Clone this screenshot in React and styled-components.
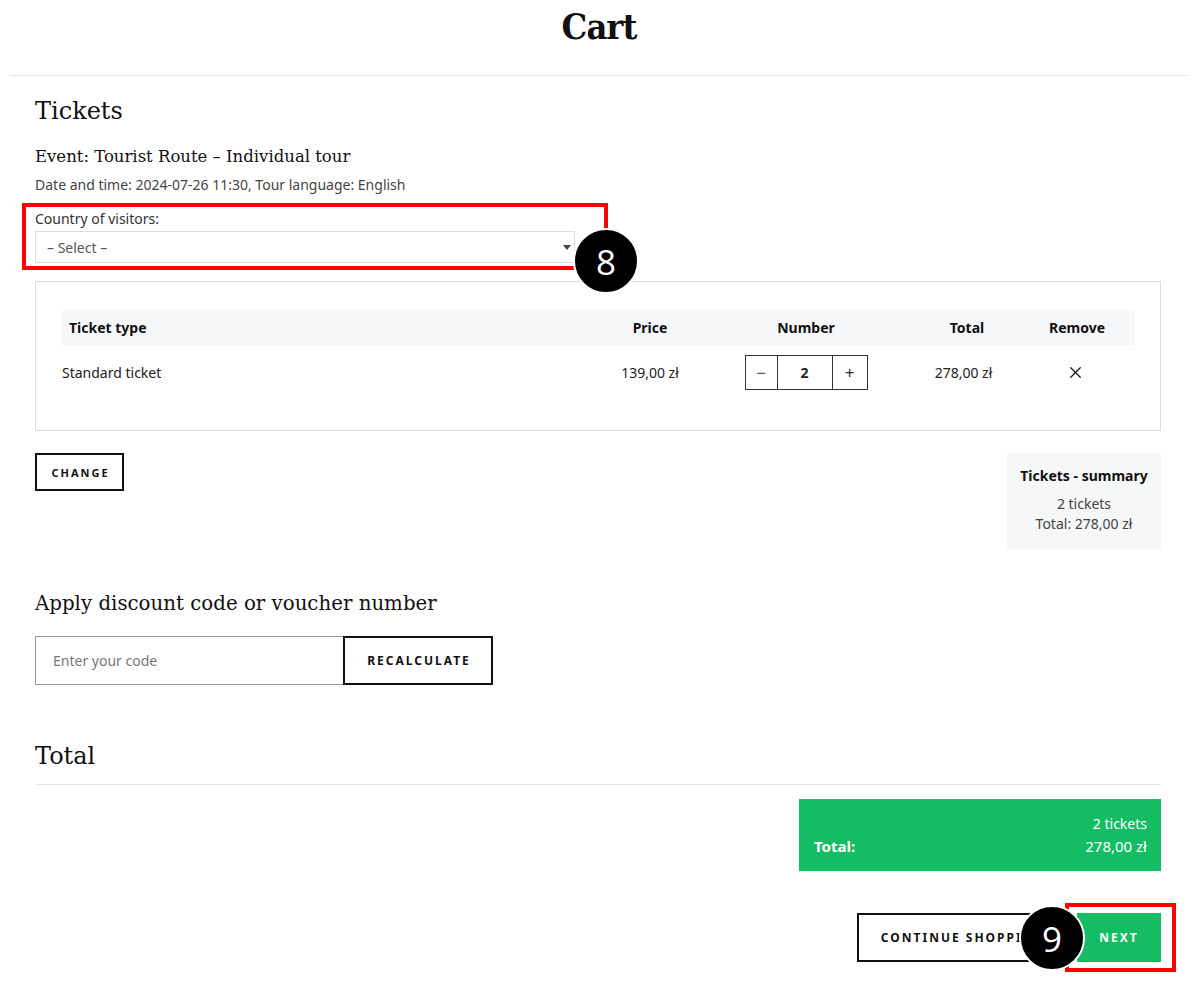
import React from "react"
import styled, { createGlobalStyle } from "styled-components"
import { X } from "lucide-react"

const GlobalStyle = createGlobalStyle`
  * { box-sizing: border-box; }
  body {
    margin: 0;
    background: #fff;
    color: #111;
    font-family: "Noto Sans", "Open Sans", sans-serif;
  }
`

const serif = `"DejaVu Serif", "Liberation Serif", serif`
const green = "#14bd63"

const rows = [{ type: "Standard ticket", price: "139,00 zł", qty: 2, total: "278,00 zł" }]

function App() {
  return (
    <Page>
      <GlobalStyle />
      <Header>
        <PageTitle>Cart</PageTitle>
      </Header>
      <Main>
        <SectionTitle>Tickets</SectionTitle>
        <EventName>Event: Tourist Route – Individual tour</EventName>
        <EventMeta>Date and time: 2024-07-26 11:30, Tour language: English</EventMeta>

        <FieldGroup>
          <Label>Country of visitors:</Label>
          <SelectBox>
            <span>– Select –</span>
            <Caret />
          </SelectBox>
          <Highlight $top={-6} $left={-13} $width={586} $height={67} />
          <Badge $top={19} $left={538}>8</Badge>
        </FieldGroup>

        <TableCard>
          <HeadRow>
            <HeadCell $align="left">Ticket type</HeadCell>
            <HeadCell>Price</HeadCell>
            <HeadCell>Number</HeadCell>
            <HeadCell>Total</HeadCell>
            <HeadCell>Remove</HeadCell>
          </HeadRow>
          {rows.map((r) => (
            <BodyRow key={r.type}>
              <Cell $align="left">{r.type}</Cell>
              <Cell>{r.price}</Cell>
              <Cell>
                <Stepper>
                  <StepBtn $w={31}>−</StepBtn>
                  <StepValue>{r.qty}</StepValue>
                  <StepBtn $w={34}>+</StepBtn>
                </Stepper>
              </Cell>
              <Cell $shift={-7}>{r.total}</Cell>
              <Cell $shift={-4}>
                <X size={19} strokeWidth={1.6} color="#111" />
              </Cell>
            </BodyRow>
          ))}
        </TableCard>

        <ActionRow>
          <OutlineButton $w={89} $h={38} $size={11}>Change</OutlineButton>
          <SummaryBox>
            <SummaryTitle>Tickets - summary</SummaryTitle>
            <SummaryLine>2 tickets</SummaryLine>
            <SummaryLine>Total: 278,00 zł</SummaryLine>
          </SummaryBox>
        </ActionRow>

        <SubTitle>Apply discount code or voucher number</SubTitle>
        <CodeRow>
          <CodeInput placeholder="Enter your code" />
          <OutlineButton $w={150} $h={49} $size={12}>Recalculate</OutlineButton>
        </CodeRow>

        <TotalTitle>Total</TotalTitle>
        <TotalBox>
          <TotalLine>
            <span />
            <TotalValue $size={14}>2 tickets</TotalValue>
          </TotalLine>
          <TotalLine>
            <TotalLabel>Total:</TotalLabel>
            <TotalValue $size={15}>278,00 zł</TotalValue>
          </TotalLine>
        </TotalBox>

        <Footer>
          <OutlineButton $w={210} $h={49} $size={12}>Continue shopping</OutlineButton>
          <NextWrap>
            <NextButton>Next</NextButton>
            <Highlight $top={-10} $left={-12} $width={111} $height={69} />
            <Badge $top={-8} $left={-58}>9</Badge>
          </NextWrap>
        </Footer>
      </Main>
    </Page>
  )
}

export default App

const Page = styled.div`
  width: 1200px;
  min-height: 981px;
  padding-bottom: 20px;
`

const Header = styled.header`
  margin: 0 12px 0 10px;
  height: 76px;
  padding-top: 4px;
  border-bottom: 1.5px solid #e4e4e4;
  text-align: center;
`

const PageTitle = styled.h1`
  margin: 0;
  font-family: ${serif};
  font-stretch: condensed;
  font-size: 36px;
  line-height: 44px;
  font-weight: 700;
  letter-spacing: -1px;
`

const Main = styled.main`
  padding: 19px 39px 0 35px;
  display: flex;
  flex-direction: column;
`

const SectionTitle = styled.h2`
  margin: 0;
  font-family: ${serif};
  font-weight: 400;
  font-size: 24px;
  line-height: 32px;
`

const EventName = styled.h3`
  margin: 18px 0 0;
  font-family: ${serif};
  font-weight: 400;
  font-size: 16.5px;
  line-height: 24px;
`

const EventMeta = styled.p`
  margin: 6px 0 0;
  font-size: 14px;
  line-height: 20px;
  color: #444;
`

const FieldGroup = styled.div`
  position: relative;
  margin-top: 14px;
  width: 540px;
`

const Label = styled.div`
  font-size: 14px;
  line-height: 20px;
  color: #333;
  margin-bottom: 2px;
`

const SelectBox = styled.div`
  height: 32px;
  border: 1px solid #dcdcdc;
  padding: 0 0 0 11px;
  display: flex;
  align-items: center;
  justify-content: space-between;
  font-size: 14px;
  color: #555;
`

const Caret = styled.span`
  width: 0;
  height: 0;
  margin-right: 3px;
  border-left: 4.5px solid transparent;
  border-right: 4.5px solid transparent;
  border-top: 5px solid #444;
`

const Highlight = styled.div`
  position: absolute;
  top: ${(p) => p.$top}px;
  left: ${(p) => p.$left}px;
  width: ${(p) => p.$width}px;
  height: ${(p) => p.$height}px;
  border: 4.5px solid #ff0000;
  pointer-events: none;
`

const Badge = styled.div`
  position: absolute;
  top: ${(p) => p.$top}px;
  left: ${(p) => p.$left}px;
  width: 66px;
  height: 66px;
  border-radius: 50%;
  background: #000;
  border: 2px solid #fff;
  color: #fff;
  display: flex;
  align-items: center;
  justify-content: center;
  font-family: "Open Sans", "Noto Sans", sans-serif;
  font-size: 35px;
  font-weight: 500;
  z-index: 2;
`

const TableCard = styled.section`
  margin-top: 18px;
  border: 1px solid #dcdcdc;
  padding: 28px 26px 40px;
`

const columns = "540px 96px 216px 106px 114px"

const HeadRow = styled.div`
  display: grid;
  grid-template-columns: ${columns};
  height: 35px;
  background: #f6f7f9;
  align-items: center;
`

const HeadCell = styled.div`
  font-size: 14px;
  font-weight: 700;
  text-align: ${(p) => p.$align || "center"};
  padding-left: ${(p) => (p.$align === "left" ? "7px" : "0")};
`

const BodyRow = styled.div`
  display: grid;
  grid-template-columns: ${columns};
  padding-top: 10px;
  align-items: center;
`

const Cell = styled.div`
  font-size: 14px;
  color: #222;
  display: flex;
  justify-content: ${(p) => (p.$align === "left" ? "flex-start" : "center")};
  align-items: center;
  margin-left: ${(p) => p.$shift || 0}px;
`

const Stepper = styled.div`
  display: flex;
  height: 35px;
  border: 1px solid #333;
`

const StepBtn = styled.div`
  width: ${(p) => p.$w}px;
  display: flex;
  align-items: center;
  justify-content: center;
  font-size: 17px;
  color: #333;
`

const StepValue = styled.div`
  width: 56px;
  border-left: 1px solid #333;
  border-right: 1px solid #333;
  display: flex;
  align-items: center;
  justify-content: center;
  font-size: 14px;
  font-weight: 700;
`

const ActionRow = styled.div`
  margin-top: 22px;
  display: flex;
  justify-content: space-between;
  align-items: flex-start;
`

const OutlineButton = styled.button`
  width: ${(p) => p.$w}px;
  height: ${(p) => p.$h}px;
  flex-shrink: 0;
  border: 2px solid #111;
  background: #fff;
  font-family: "Noto Sans", "Open Sans", sans-serif;
  font-size: ${(p) => p.$size}px;
  font-weight: 700;
  letter-spacing: 2px;
  text-transform: uppercase;
  color: #111;
  white-space: nowrap;
  overflow: hidden;
  padding: 0 0 0 2px;
`

const SummaryBox = styled.aside`
  width: 154px;
  background: #f6f7f9;
  padding: 13px 0 15px;
  text-align: center;
`

const SummaryTitle = styled.div`
  font-size: 14px;
  font-weight: 700;
  line-height: 20px;
  margin-bottom: 8px;
`

const SummaryLine = styled.div`
  font-size: 14px;
  line-height: 20px;
  color: #444;
`

const SubTitle = styled.h3`
  margin: 41px 0 0;
  font-family: ${serif};
  font-weight: 400;
  font-size: 19.8px;
  line-height: 28px;
`

const CodeRow = styled.div`
  margin-top: 18px;
  display: flex;
`

const CodeInput = styled.input`
  width: 308px;
  height: 49px;
  border: 1px solid #999;
  border-right: none;
  padding: 0 17px;
  font-family: "Noto Sans", "Open Sans", sans-serif;
  font-size: 14px;
  outline: none;
  &::placeholder {
    color: #777;
  }
`

const TotalTitle = styled.h2`
  margin: 55px 0 0;
  padding-bottom: 12px;
  border-bottom: 1.5px solid #e4e4e4;
  font-family: ${serif};
  font-weight: 400;
  font-size: 24px;
  line-height: 32px;
`

const TotalBox = styled.div`
  margin-top: 14px;
  align-self: flex-end;
  width: 362px;
  background: ${green};
  color: #fff;
  padding: 14px 14px 14px 15px;
`

const TotalLine = styled.div`
  display: flex;
  justify-content: space-between;
  align-items: baseline;
  line-height: 22px;
`

const TotalLabel = styled.strong`
  font-size: 15px;
  font-weight: 700;
`

const TotalValue = styled.span`
  font-size: ${(p) => p.$size}px;
`

const Footer = styled.div`
  margin-top: 42px;
  display: flex;
  justify-content: flex-end;
  gap: 10px;
`

const NextWrap = styled.div`
  position: relative;
`

const NextButton = styled.button`
  width: 84px;
  height: 49px;
  border: none;
  background: ${green};
  color: #fff;
  font-family: "Noto Sans", "Open Sans", sans-serif;
  font-size: 12px;
  font-weight: 700;
  letter-spacing: 2px;
  text-transform: uppercase;
`
